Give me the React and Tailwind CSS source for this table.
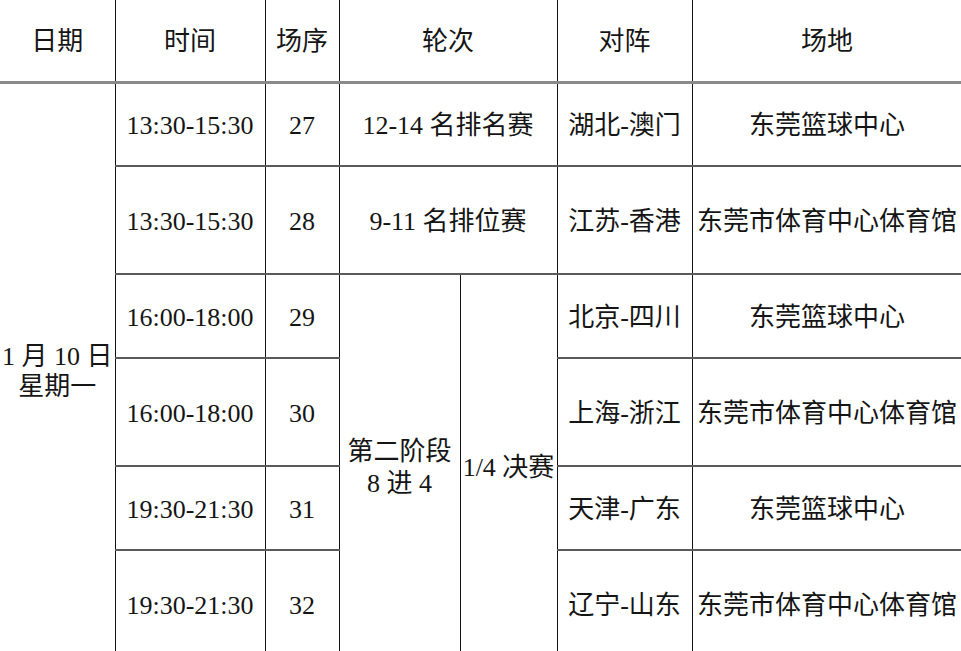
import React from 'react';

const rows = [
  { time: '13:30-15:30', no: '27', round: '12-14 名排名赛', match: '湖北-澳门', venue: '东莞篮球中心', h: 'h-[84px]' },
  { time: '13:30-15:30', no: '28', round: '9-11 名排位赛', match: '江苏-香港', venue: '东莞市体育中心体育馆', h: 'h-[108px]' },
  { time: '16:00-18:00', no: '29', match: '北京-四川', venue: '东莞篮球中心', h: 'h-[84px]' },
  { time: '16:00-18:00', no: '30', match: '上海-浙江', venue: '东莞市体育中心体育馆', h: 'h-[108px]' },
  { time: '19:30-21:30', no: '31', match: '天津-广东', venue: '东莞篮球中心', h: 'h-[84px]' },
  { time: '19:30-21:30', no: '32', match: '辽宁-山东', venue: '东莞市体育中心体育馆', h: 'h-[108px]' },
];

const cell = 'border-r-[1.5px] border-r-[#111] border-b-2 border-b-[#5a5a5a] text-center align-middle p-0 pt-[3px] whitespace-nowrap';
const head = `${cell} font-normal border-b-[3px] border-b-[#8a8a8a]`;

const App = () => {
  return (
    <div
      className="w-[961px] h-[651px] overflow-hidden bg-white text-[#151515] text-[26px]"
      style={{ fontFamily: '"Liberation Serif", "Noto Sans CJK SC", serif' }}
    >
      <table className="table-fixed border-collapse w-[962px]">
        <colgroup>
          <col className="w-[115px]" />
          <col className="w-[150px]" />
          <col className="w-[74px]" />
          <col className="w-[121px]" />
          <col className="w-[97px]" />
          <col className="w-[135px]" />
          <col className="w-[270px]" />
        </colgroup>
        <thead>
          <tr className="h-[82px]">
            <th className={head}>日期</th>
            <th className={head}>时间</th>
            <th className={head}>场序</th>
            <th colSpan={2} className={head}>轮次</th>
            <th className={head}>对阵</th>
            <th className={head}>场地</th>
          </tr>
        </thead>
        <tbody>
          {rows.map((r, i) => (
            <tr key={r.no} className={r.h}>
              {i === 0 && (
                <td rowSpan={6} className={`${cell} leading-[30px]`}>
                  <div>1 月 10 日</div>
                  <div>星期一</div>
                </td>
              )}
              <td className={cell}>{r.time}</td>
              <td className={cell}>{r.no}</td>
              {r.round && (
                <td colSpan={2} className={cell}>{r.round}</td>
              )}
              {i === 2 && (
                <>
                  <td rowSpan={4} className={`${cell} leading-[32px]`}>
                    <div>第二阶段</div>
                    <div>8 进 4</div>
                  </td>
                  <td rowSpan={4} className={`${cell} pt-2`}>1/4 决赛</td>
                </>
              )}
              <td className={cell}>{r.match}</td>
              <td className={cell}>{r.venue}</td>
            </tr>
          ))}
        </tbody>
      </table>
    </div>
  );
};

export default App;
